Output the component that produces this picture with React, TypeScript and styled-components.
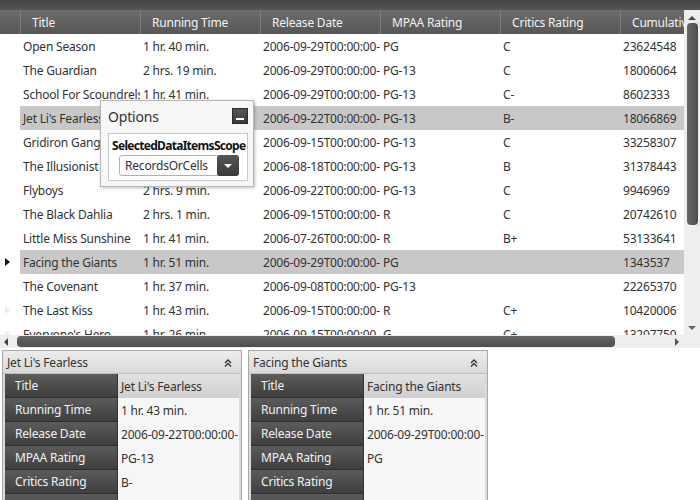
import styled, { createGlobalStyle } from "styled-components";

type Movie = {
  title: string;
  time: string;
  date: string;
  mpaa: string;
  critics: string;
  gross: string;
};

const movies: Movie[] = [
  { title: "Open Season", time: "1 hr. 40 min.", date: "2006-09-29T00:00:00-07:00", mpaa: "PG", critics: "C", gross: "23624548" },
  { title: "The Guardian", time: "2 hrs. 19 min.", date: "2006-09-29T00:00:00-07:00", mpaa: "PG-13", critics: "C", gross: "18006064" },
  { title: "School For Scoundrels", time: "1 hr. 41 min.", date: "2006-09-29T00:00:00-07:00", mpaa: "PG-13", critics: "C-", gross: "8602333" },
  { title: "Jet Li's Fearless", time: "1 hr. 43 min.", date: "2006-09-22T00:00:00-07:00", mpaa: "PG-13", critics: "B-", gross: "18066869" },
  { title: "Gridiron Gang", time: "2 hrs. 5 min.", date: "2006-09-15T00:00:00-07:00", mpaa: "PG-13", critics: "C", gross: "33258307" },
  { title: "The Illusionist", time: "1 hr. 50 min.", date: "2006-08-18T00:00:00-07:00", mpaa: "PG-13", critics: "B", gross: "31378443" },
  { title: "Flyboys", time: "2 hrs. 9 min.", date: "2006-09-22T00:00:00-07:00", mpaa: "PG-13", critics: "C", gross: "9946969" },
  { title: "The Black Dahlia", time: "2 hrs. 1 min.", date: "2006-09-15T00:00:00-07:00", mpaa: "R", critics: "C", gross: "20742610" },
  { title: "Little Miss Sunshine", time: "1 hr. 41 min.", date: "2006-07-26T00:00:00-07:00", mpaa: "R", critics: "B+", gross: "53133641" },
  { title: "Facing the Giants", time: "1 hr. 51 min.", date: "2006-09-29T00:00:00-07:00", mpaa: "PG", critics: "", gross: "1343537" },
  { title: "The Covenant", time: "1 hr. 37 min.", date: "2006-09-08T00:00:00-07:00", mpaa: "PG-13", critics: "", gross: "22265370" },
  { title: "The Last Kiss", time: "1 hr. 43 min.", date: "2006-09-15T00:00:00-07:00", mpaa: "R", critics: "C+", gross: "10420006" },
  { title: "Everyone's Hero", time: "1 hr. 26 min.", date: "2006-09-15T00:00:00-07:00", mpaa: "G", critics: "C+", gross: "13207750" },
];

const selected = [3, 9];
const active = 9;
const hinted = [11, 12];

const columns = [
  { key: "title", label: "Title", width: 120 },
  { key: "time", label: "Running Time", width: 120 },
  { key: "date", label: "Release Date", width: 120 },
  { key: "mpaa", label: "MPAA Rating", width: 120 },
  { key: "critics", label: "Critics Rating", width: 120 },
  { key: "gross", label: "Cumulative Gross", width: 90 },
] as const;

const Global = createGlobalStyle`
  html, body { margin: 0; padding: 0; background: #fff; }
  body {
    font-family: "Noto Sans", "Open Sans", sans-serif;
    font-size: 12px;
    letter-spacing: -0.2px;
    color: #333;
  }
`;

const Page = styled.div`
  width: 700px;
  height: 500px;
  overflow: hidden;
  position: relative;
`;

const GridArea = styled.div`
  height: 348px;
  display: flex;
  flex-direction: column;
  background: #eeeeee;
`;

const TopStrip = styled.div`
  height: 10px;
  background: linear-gradient(#444, #555);
`;

const GridMain = styled.div`
  flex: 1;
  display: flex;
  min-height: 0;
`;

const Viewport = styled.div`
  flex: 1;
  overflow: hidden;
  background: #fff;
`;

const HeaderRow = styled.div`
  display: flex;
  height: 24px;
  background: linear-gradient(#6c6c6c, #575757);
  color: #f2f2f2;
`;

const HeaderCell = styled.div<{ $w: number }>`
  flex: 0 0 ${(p) => p.$w}px;
  box-sizing: border-box;
  border-left: 1px solid #7c7c7c;
  padding: 1px 0 0 11px;
  line-height: 23px;
  white-space: nowrap;
  overflow: hidden;
`;

const SelectorHead = styled.div`
  flex: 0 0 20px;
`;

const Row = styled.div`
  display: flex;
  height: 24px;
`;

const Selector = styled.div`
  flex: 0 0 20px;
  display: flex;
  align-items: center;
  justify-content: center;
  background: #fff;
`;

const Arrow = styled.span<{ $on: boolean }>`
  width: 0;
  height: 0;
  margin-left: -6px;
  border-top: 4px solid transparent;
  border-bottom: 4px solid transparent;
  border-left: 5px solid ${(p) => (p.$on ? "#111" : "#eeeeee")};
`;

const Cells = styled.div<{ $sel: boolean }>`
  flex: 1;
  display: flex;
  background: ${(p) => (p.$sel ? "#c8c8c8" : "#fff")};
`;

const Cell = styled.div<{ $w: number }>`
  flex: 0 0 ${(p) => p.$w}px;
  box-sizing: border-box;
  padding: 1px 0 0 3px;
  line-height: 23px;
  white-space: nowrap;
  overflow: hidden;
  color: #333;
`;

const VScroll = styled.div`
  flex: 0 0 16px;
  display: flex;
  flex-direction: column;
  align-items: center;
  background: #eeeeee;
  padding: 6px 0 5px;
  box-sizing: border-box;
`;

const VThumb = styled.div`
  width: 11px;
  height: 202px;
  margin-top: 3px;
  border-radius: 4px;
  background: linear-gradient(90deg, #666, #4e4e4e);
`;

const Spacer = styled.div`
  flex: 1;
`;

const HScroll = styled.div`
  height: 13px;
  display: flex;
  align-items: center;
  padding: 0 0 0 4px;
`;

const HThumb = styled.div`
  width: 598px;
  height: 11px;
  margin-left: 9px;
  border-radius: 4px;
  background: linear-gradient(#666, #4e4e4e);
`;

const Tri = styled.span<{ $dir: "up" | "down" | "left" | "right"; $c?: string }>`
  width: 0;
  height: 0;
  ${(p) => {
    const c = p.$c ?? "#444";
    switch (p.$dir) {
      case "up":
        return `border-left:4px solid transparent;border-right:4px solid transparent;border-bottom:4px solid ${c};`;
      case "down":
        return `border-left:4px solid transparent;border-right:4px solid transparent;border-top:4px solid ${c};`;
      case "left":
        return `border-top:4px solid transparent;border-bottom:4px solid transparent;border-right:4px solid ${c};`;
      default:
        return `border-top:4px solid transparent;border-bottom:4px solid transparent;border-left:4px solid ${c};`;
    }
  }}
`;

const RightArrowBox = styled.div`
  margin-left: auto;
  width: 25px;
  display: flex;
`;

const Options = styled.div`
  position: absolute;
  left: 100px;
  top: 100px;
  width: 154px;
  height: 87px;
  box-sizing: border-box;
  background: #f7f7f7;
  border: 1px solid #b8b8b8;
  box-shadow: 1px 1px 3px rgba(0, 0, 0, 0.25);
  padding: 0 5px 0 7px;
`;

const OptionsHead = styled.div`
  height: 32px;
  display: flex;
  align-items: center;
  justify-content: space-between;
  font-size: 14px;
  color: #333;
  padding-bottom: 2px;
  box-sizing: border-box;
`;

const MinButton = styled.div`
  width: 16px;
  height: 16px;
  background: linear-gradient(#555, #3a3a3a);
  border: 1px solid #2a2a2a;
  box-sizing: border-box;
  display: flex;
  align-items: flex-end;
  justify-content: center;
  padding-bottom: 3px;
  &::after {
    content: "";
    width: 8px;
    height: 2px;
    background: #fff;
  }
`;

const OptionsBody = styled.div`
  border: 1px solid #c8c8c8;
  background: #fff;
  padding: 5px 0 4px 3px;
  width: 140px;
  box-sizing: border-box;
`;

const FieldLabel = styled.div`
  font-weight: bold;
  font-size: 12px;
  color: #111;
  letter-spacing: -0.7px;
  white-space: nowrap;
  line-height: 14px;
`;

const Combo = styled.div`
  margin: 2px 0 0 7px;
  width: 120px;
  height: 21px;
  box-sizing: border-box;
  border: 1px solid #b0b0b0;
  border-radius: 3px;
  display: flex;
  align-items: center;
  background: #fff;
  color: #333;
  padding-left: 5px;
`;

const ComboButton = styled.div`
  margin-left: auto;
  width: 22px;
  height: 21px;
  margin-right: -1px;
  border-radius: 3px;
  background: linear-gradient(#555, #3a3a3a);
  display: flex;
  align-items: center;
  justify-content: center;
`;

const Cards = styled.div`
  display: flex;
  gap: 6px;
  padding: 2px 0 0 2px;
`;

const Card = styled.div`
  width: 240px;
  height: 160px;
  box-sizing: border-box;
  border: 1px solid #a8a8a8;
  background: #dadada;
  display: flex;
  flex-direction: column;
`;

const CardHead = styled.div`
  height: 23px;
  flex: 0 0 23px;
  display: flex;
  align-items: center;
  padding: 1px 8px 0 4px;
  box-sizing: border-box;
  background: linear-gradient(#ececec, #d9d9d9);
  border-bottom: 1px solid #bdbdbd;
  color: #333;
`;

const Chevrons = styled.svg`
  margin-left: auto;
`;

const CardBody = styled.div`
  padding: 0 2px;
  display: flex;
  flex-direction: column;
`;

const FieldRow = styled.div`
  display: flex;
  height: 24px;
  flex: 0 0 24px;
`;

const FieldName = styled.div`
  flex: 0 0 113px;
  box-sizing: border-box;
  padding: 1px 0 0 10px;
  line-height: 22px;
  color: #f0f0f0;
  background: linear-gradient(#5c5c5c, #3e3e3e);
  border-bottom: 1px solid #2e2e2e;
  border-right: 1px solid #333;
  white-space: nowrap;
`;

const FieldValue = styled.div<{ $head: boolean }>`
  flex: 1;
  padding: 1px 0 0 3px;
  line-height: 23px;
  white-space: nowrap;
  overflow: hidden;
  color: #333;
  background: ${(p) => (p.$head ? "linear-gradient(#e2e2e2, #cfcfcf)" : "#f6f6f6")};
`;

const fields: { label: string; key: keyof Movie }[] = [
  { label: "Title", key: "title" },
  { label: "Running Time", key: "time" },
  { label: "Release Date", key: "date" },
  { label: "MPAA Rating", key: "mpaa" },
  { label: "Critics Rating", key: "critics" },
  { label: "Cumulative Gross", key: "gross" },
];

const RecordCard = ({ movie }: { movie: Movie }) => (
  <Card>
    <CardHead>
      {movie.title}
      <Chevrons width="10" height="10" viewBox="0 0 10 10">
        <path d="M2 5 L5 2 L8 5 M2 8.5 L5 5.5 L8 8.5" stroke="#333" strokeWidth="1.3" fill="none" />
      </Chevrons>
    </CardHead>
    <CardBody>
      {fields.map((f, i) => (
        <FieldRow key={f.key}>
          <FieldName>{f.label}</FieldName>
          <FieldValue $head={i === 0}>{f.key === "date" ? movie.date.slice(0, 20) : movie[f.key]}</FieldValue>
        </FieldRow>
      ))}
    </CardBody>
  </Card>
);

export default function App() {
  return (
    <Page>
      <Global />
      <GridArea>
        <TopStrip />
        <GridMain>
          <Viewport>
            <HeaderRow>
              <SelectorHead />
              {columns.map((c) => (
                <HeaderCell key={c.key} $w={c.width}>
                  {c.label}
                </HeaderCell>
              ))}
            </HeaderRow>
            {movies.map((m, i) => (
              <Row key={m.title}>
                <Selector>
                  {(i === active || hinted.includes(i)) && <Arrow $on={i === active} />}
                </Selector>
                <Cells $sel={selected.includes(i)}>
                  {columns.map((c) => (
                    <Cell key={c.key} $w={c.width}>
                      {c.key === "date" ? m.date.slice(0, 20) : m[c.key]}
                    </Cell>
                  ))}
                </Cells>
              </Row>
            ))}
          </Viewport>
          <VScroll>
            <Tri $dir="up" />
            <VThumb />
            <Spacer />
            <Tri $dir="down" $c="#666" />
          </VScroll>
        </GridMain>
        <HScroll>
          <Tri $dir="left" />
          <HThumb />
          <RightArrowBox>
            <Tri $dir="right" $c="#555" />
          </RightArrowBox>
        </HScroll>
      </GridArea>

      <Options>
        <OptionsHead>
          Options
          <MinButton />
        </OptionsHead>
        <OptionsBody>
          <FieldLabel>SelectedDataItemsScope</FieldLabel>
          <Combo>
            RecordsOrCells
            <ComboButton>
              <Tri $dir="down" $c="#fff" />
            </ComboButton>
          </Combo>
        </OptionsBody>
      </Options>

      <Cards>
        <RecordCard movie={movies[3]} />
        <RecordCard movie={movies[9]} />
      </Cards>
    </Page>
  );
}
